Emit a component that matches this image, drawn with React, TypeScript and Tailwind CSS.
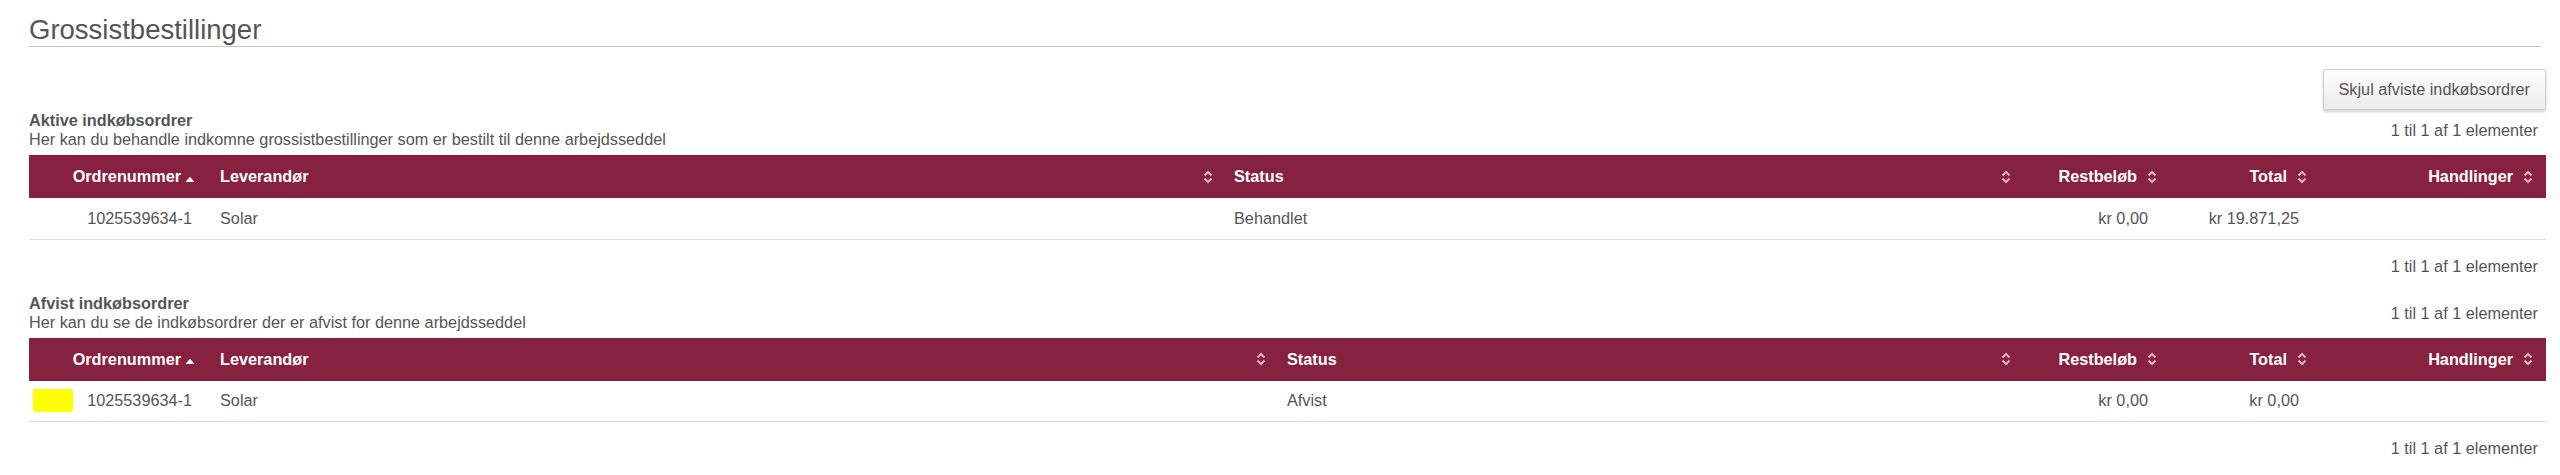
import React from "react";

const SortIcon = () => (
  <svg width="10" height="14" viewBox="0 0 10 14" className="shrink-0">
    <path
      d="M1.5 5.5 L5 2 L8.5 5.5 M1.5 8.5 L5 12 L8.5 8.5"
      fill="none"
      stroke="#dcb2bf"
      strokeWidth="2"
    />
  </svg>
);

const AscIcon = () => (
  <svg width="10" height="6" viewBox="0 0 10 6" className="shrink-0 translate-y-[2px]">
    <polygon points="0.5,6 5,0.8 9.5,6" fill="#ffffff" />
  </svg>
);

type TableProps = {
  rejected?: boolean;
  status: string;
  rest: string;
  total: string;
};

function OrderTable({ rejected, status, rest, total }: TableProps) {
  return (
    <table className="mt-[6px] w-full table-fixed border-collapse">
      <colgroup>
        <col className="w-[183px]" />
        <col className={rejected ? "w-[1067px]" : "w-[1014px]"} />
        <col />
        <col className="w-[146px]" />
        <col className="w-[150px]" />
        <col className="w-[226px]" />
      </colgroup>
      <thead>
        <tr className="bg-[#86213f] text-white font-bold">
          <th className="h-[43px] p-0 pr-[17px] font-bold">
            <div className="flex items-center justify-end gap-[4px]">
              <span>Ordrenummer</span>
              <AscIcon />
            </div>
          </th>
          <th className="p-0 pl-[8px] pr-[13px] font-bold">
            <div className="flex items-center justify-between">
              <span>Leverandør</span>
              <SortIcon />
            </div>
          </th>
          <th className="p-0 pl-[8px] pr-[13px] font-bold">
            <div className="flex items-center justify-between">
              <span>Status</span>
              <SortIcon />
            </div>
          </th>
          <th className="p-0 pr-[13px] font-bold">
            <div className="flex items-center justify-end gap-[10px]">
              <span>Restbeløb</span>
              <SortIcon />
            </div>
          </th>
          <th className="p-0 pr-[13px] font-bold">
            <div className="flex items-center justify-end gap-[10px]">
              <span>Total</span>
              <SortIcon />
            </div>
          </th>
          <th className="p-0 pr-[13px] font-bold">
            <div className="flex items-center justify-end gap-[10px]">
              <span>Handlinger</span>
              <SortIcon />
            </div>
          </th>
        </tr>
      </thead>
      <tbody>
        <tr className="border-b border-[#dddddd] text-[#555]">
          <td className="h-[41px] p-0 pl-[4px] pr-[20px]">
            <div className="flex items-center justify-between">
              {rejected ? (
                <span className="block h-[23px] w-[40px] rounded-[2px] bg-[#ffff00]" />
              ) : (
                <span />
              )}
              <span>1025539634-1</span>
            </div>
          </td>
          <td className="p-0 pl-[8px]">Solar</td>
          <td className="p-0 pl-[8px]">{status}</td>
          <td className="p-0 pr-[22px] text-right">{rest}</td>
          <td className="p-0 pr-[21px] text-right">{total}</td>
          <td className="p-0" />
        </tr>
      </tbody>
    </table>
  );
}

export default function App() {
  return (
    <div className="min-h-[475px] w-[2560px] bg-white pl-[29px] pr-[14px] font-['Liberation_Sans',Arial,sans-serif] text-[16.25px] leading-[19px] text-[#555]">
      <h1 className="mr-[5px] border-b border-[#c6c6c6] pt-[14px] text-[27.5px] font-normal leading-[32px] text-[#555]">
        Grossistbestillinger
      </h1>

      <div className="flex items-end justify-between">
        <div>
          <div className="font-bold">Aktive indkøbsordrer</div>
          <div>Her kan du behandle indkomne grossistbestillinger som er bestilt til denne arbejdsseddel</div>
        </div>
        <div className="flex flex-col items-end pb-[9px]">
          <button className="mt-[22px] mb-[11px] h-[41px] rounded-[2px] border border-[#cfcfcf] bg-linear-to-b from-white to-[#ebebeb] px-[15px] text-[#555] shadow-[0_2px_3px_rgba(0,0,0,0.18)]">
            Skjul afviste indkøbsordrer
          </button>
          <div className="pr-[8px]">1 til 1 af 1 elementer</div>
        </div>
      </div>

      <OrderTable status="Behandlet" rest="kr 0,00" total="kr 19.871,25" />

      <div className="mt-[17px] pr-[8px] text-right">1 til 1 af 1 elementer</div>

      <div className="mt-[18px] flex items-end justify-between">
        <div>
          <div className="font-bold">Afvist indkøbsordrer</div>
          <div>Her kan du se de indkøbsordrer der er afvist for denne arbejdsseddel</div>
        </div>
        <div className="pb-[9px] pr-[8px]">1 til 1 af 1 elementer</div>
      </div>

      <OrderTable rejected status="Afvist" rest="kr 0,00" total="kr 0,00" />

      <div className="mt-[17px] pr-[8px] text-right">1 til 1 af 1 elementer</div>
    </div>
  );
}
